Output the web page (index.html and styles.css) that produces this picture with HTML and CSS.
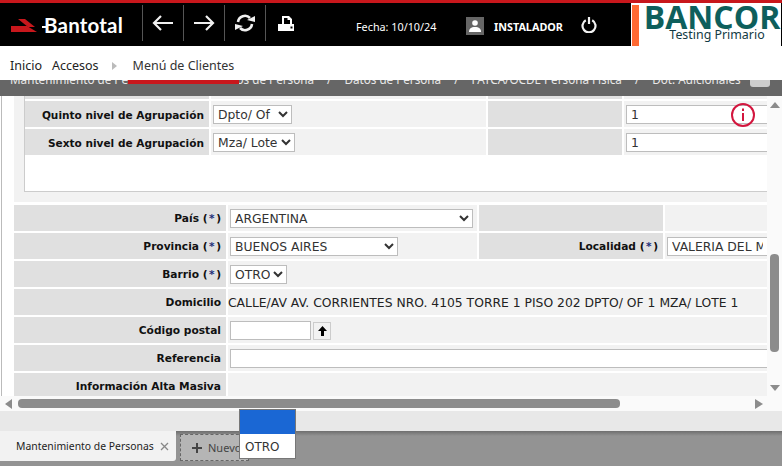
FILE: index.html
```html
<!DOCTYPE html>
<html lang="es">
<head>
  <meta charset="UTF-8" />
  <title>Bantotal - Mantenimiento de Personas</title>
  <link rel="stylesheet" href="styles.css">
</head>
<body>
  <div class="top-line"></div>
  <header class="topbar">
    <div class="logo">
      <svg class="logo-mark" width="28" height="14" viewBox="0 0 28 14">
        <polygon fill="#c8171c" points="7,0 14,0 24,8 17,8" />
        <polygon fill="#c8171c" points="0,7 16,7 26,13 0,13" />
      </svg>
      <span class="logo-text">Bantotal</span>
    </div>
    <div class="tool">
      <svg width="22" height="16" viewBox="0 0 22 16" fill="none" stroke="#f0f0f0" stroke-width="2.2">
        <path d="M21 8H2M9 1L2 8l7 7" />
      </svg>
    </div>
    <div class="tool">
      <svg width="22" height="16" viewBox="0 0 22 16" fill="none" stroke="#f0f0f0" stroke-width="2.2">
        <path d="M1 8h19M13 1l7 7-7 7" />
      </svg>
    </div>
    <div class="tool">
      <svg width="22" height="18" viewBox="0 0 22 18" fill="none" stroke="#f0f0f0" stroke-width="2.6">
        <path d="M4 8a7 7 0 0 1 12-4" />
        <path d="M18 10a7 7 0 0 1-12 4" />
        <path fill="#f0f0f0" stroke="none" d="M13 6l8-4v6zM9 12l-8 4v-6z" />
      </svg>
    </div>
    <div class="tool">
      <svg width="17" height="15" viewBox="0 0 17 15">
        <path fill="#fff" d="M4 0h7l3 3v5h2v7H0V8h4zM6 2v6h6V4H9.500V2z" fill-rule="evenodd" />
        <rect x="12.500" y="10.500" width="2" height="2" fill="#000" />
      </svg>
    </div>
    <span class="fecha">Fecha: 10/10/24</span>
    <span class="user-box">
      <svg width="12" height="12" viewBox="0 0 12 12">
        <circle cx="6" cy="3" r="2.800" fill="#fff" />
        <path fill="#fff" d="M0 12c0-3.500 2-5 6-5s6 1.500 6 5z" />
      </svg>
    </span>
    <span class="user-name">INSTALADOR</span>
    <svg class="power" width="16" height="16" viewBox="0 0 16 16" fill="none" stroke="#f2f2f2" stroke-width="2.200">
      <path d="M4.800 3.200a6.500 6.500 0 1 0 6.400 0" />
      <path d="M8 0v7" />
    </svg>
    <div class="brand">
      <div class="brand-bar"></div>
      <div class="brand-text">
        <div class="brand-name">BANCOR</div>
        <div class="brand-env">Testing Primario</div>
      </div>
    </div>
  </header>

  <nav class="menu">
    <a href="#">Inicio</a>
    <a href="#">Accesos</a>
    <span class="menu-arrow"></span>
    <a href="#" class="active">Menú de Clientes</a>
  </nav>

  <div class="crumbs">
    <span class="crumb-first">Mantenimiento de Personas</span>
    <span>/</span>
    <span>Datos de Persona</span>
    <span>/</span>
    <span>Datos de Persona</span>
    <span>/</span>
    <span>FATCA/OCDE Persona Física</span>
    <span>/</span>
    <span>Dot. Adicionales</span>
    <span class="crumb-toggle"></span>
  </div>

  <main class="work">
    <div class="view">
      <div class="panel">
        <div class="inner">
          <div class="grid-inner cut">
            <div class="lbl"></div><div class="val"></div><div class="lbl"></div><div class="val"></div>
          </div>
          <div class="grid-inner">
            <div class="lbl">Quinto nivel de Agrupación</div>
            <div class="val"><select class="sel-dpto"><option>Dpto/ Of</option></select></div>
            <div class="lbl"></div>
            <div class="val"><input class="inp-full" value="1"></div>

            <div class="lbl">Sexto nivel de Agrupación</div>
            <div class="val"><select class="sel-mza"><option>Mza/ Lote</option></select></div>
            <div class="lbl"></div>
            <div class="val"><input class="inp-full" value="1"></div>
          </div>
        </div>
      </div>

      <div class="grid-outer">
        <div class="lbl">País (<span class="star">*</span>)</div>
        <div class="val"><select class="sel-pais"><option>ARGENTINA</option></select></div>
        <div class="lbl"></div>
        <div class="val"></div>

        <div class="lbl">Provincia (<span class="star">*</span>)</div>
        <div class="val"><select class="sel-prov"><option>BUENOS AIRES</option></select></div>
        <div class="lbl">Localidad (<span class="star">*</span>)</div>
        <div class="val"><input class="inp-full" value="VALERIA DEL MAR"></div>

        <div class="lbl">Barrio (<span class="star">*</span>)</div>
        <div class="val wide"><select class="sel-barrio"><option>OTRO</option></select></div>

        <div class="lbl">Domicilio</div>
        <div class="val wide domicilio">CALLE/AV AV. CORRIENTES NRO. 4105 TORRE 1 PISO 202 DPTO/ OF 1 MZA/ LOTE 1</div>

        <div class="lbl">Código postal</div>
        <div class="val wide">
          <input class="inp-cp">
          <button class="btn-up">
            <svg width="9" height="10" viewBox="0 0 9 10"><path d="M4.500 0L9 5H6v5H3V5H0z" /></svg>
          </button>
        </div>

        <div class="lbl">Referencia</div>
        <div class="val wide"><input class="inp-full"></div>

        <div class="lbl">Información Alta Masiva</div>
        <div class="val wide"></div>
      </div>

      <svg class="info-icon" width="26" height="26" viewBox="0 0 26 26" fill="none" stroke="#d3163e">
        <circle cx="13" cy="13" r="11" stroke-width="2" />
        <path d="M13 11v8" stroke-width="2" />
        <path d="M13 6.500v2.500" stroke-width="2" />
      </svg>
    </div>

    <div class="vbar">
      <span class="arrow-up"></span>
      <span class="vthumb"></span>
      <span class="arrow-down"></span>
    </div>
  </main>

  <div class="hbar">
    <span class="arrow-left"></span>
    <span class="hthumb"></span>
    <span class="arrow-right"></span>
  </div>

  <div class="strip"></div>

  <footer class="tabs">
    <div class="tab">
      <span>Mantenimiento de Personas</span>
      <svg width="9" height="9" viewBox="0 0 9 9" stroke="#888" stroke-width="1.300"><path d="M1 1l7 7M8 1L1 8" /></svg>
    </div>
    <div class="tab-new">
      <svg width="10" height="10" viewBox="0 0 10 10" stroke="#444" stroke-width="2"><path d="M5 0v10M0 5h10" /></svg>
      <span>Nuevo</span>
    </div>
  </footer>

  <div class="popup">
    <div class="popup-sel"></div>
    <div class="popup-item">OTRO</div>
  </div>
</body>
</html>
```

FILE: styles.css
```css
* {
  box-sizing: border-box;
}
html, body {
  margin: 0;
  height: 466px;
  overflow: hidden;
}
body {
  position: relative;
  font-family: "DejaVu Sans", sans-serif;
  font-size: 10.65px;
  color: #111;
  background: #fff;
  display: flex;
  flex-direction: column;
}
.top-line {
  height: 3px;
  background: #c8171c;
}

/* header */
.topbar {
  height: 43px;
  background: #000;
  display: flex;
  align-items: center;
  color: #fff;
}
.logo {
  width: 142px;
  height: 43px;
  display: flex;
  align-items: center;
  padding-left: 11px;
}
.logo-mark {
  margin-top: 3px;
}
.logo-text {
  position: relative;
  font-family: Lato, sans-serif;
  font-weight: 700;
  font-size: 20.5px;
  margin-left: 5px;
  letter-spacing: 0.2px;
}
.logo-text::before {
  content: "";
  position: absolute;
  left: -2px;
  top: 13px;
  width: 4px;
  height: 2px;
  background: #fff;
}
.tool {
  width: 41px;
  height: 36px;
  margin-top: -3px;
  border-left: 1px solid #555;
  display: flex;
  align-items: center;
  justify-content: center;
}
.fecha {
  font-family: "Noto Sans", sans-serif;
  font-size: 10.8px;
  margin-left: 50px;
  margin-top: 3px;
  width: 109px;
}
.user-box {
  width: 18px;
  height: 18px;
  background: #666;
  display: flex;
  align-items: center;
  justify-content: center;
  margin-left: 1px;
  margin-top: 2px;
}
.user-name {
  font-family: "Noto Sans", sans-serif;
  font-weight: 700;
  font-size: 10.8px;
  margin-left: 10px;
  margin-top: 4px;
  width: 87px;
}
.power {
  margin-top: 1px;
}
.brand {
  margin-left: auto;
  width: 151px;
  height: 43px;
  background: #fff;
  border-right: 1px solid #000;
  display: flex;
  padding-top: 2px;
}
.brand-bar {
  width: 7px;
  margin-left: 1px;
  background: #ff6a33;
}
.brand-text {
  text-align: center;
  flex: 1;
  padding-left: 4px;
}
.brand-name {
  font-family: "Open Sans", sans-serif;
  font-weight: 700;
  font-size: 32px;
  line-height: 23px;
  color: #0e5f5c;
}
.brand-env {
  font-family: "Noto Sans", sans-serif;
  font-size: 12.4px;
  line-height: 12px;
  color: #123a44;
  padding-left: 10px;
  margin-top: 1px;
}

/* menu */
.menu {
  height: 34px;
  display: flex;
  align-items: center;
  padding: 5px 0 0 10px;
  font-family: "Noto Sans", sans-serif;
  font-size: 12.500px;
}
.menu a {
  color: #222;
  text-decoration: none;
  margin-right: 10px;
}
.menu-arrow {
  width: 0;
  height: 0;
  border-left: 5px solid #bbb;
  border-top: 4px solid transparent;
  border-bottom: 4px solid transparent;
  margin-left: 3px;
  margin-right: 16px;
}
.menu a.active {
  position: relative;
  color: #333;
}
.menu a.active::after {
  content: "";
  position: absolute;
  left: -5px;
  right: -5px;
  bottom: -10px;
  height: 4px;
  background: #c8171c;
}

/* breadcrumb, mostly hidden behind the menu */
.crumbs {
  height: 16px;
  background: #666;
  overflow: hidden;
  display: flex;
  gap: 13px;
  padding-left: 10px;
  color: #e8e8e8;
  font-family: "Noto Sans", sans-serif;
  font-size: 11.7px;
  line-height: 0;
  white-space: nowrap;
}
.crumbs span {
  flex: none;
  margin-top: -1px;
}
.crumbs .crumb-first {
  margin-right: 22px;
}
.crumbs .crumb-toggle {
  width: 20px;
  height: 7px;
  margin: 0 0 0 -4px;
  background: #ccc;
  border-radius: 0 0 3px 3px;
}

/* working area */
.work {
  height: 300px;
  display: flex;
}
.view {
  position: relative;
  width: 767px;
  height: 300px;
  overflow: hidden;
  padding-left: 14px;
  border-left: 1px solid #fff;
}
.view::before {
  content: "";
  position: absolute;
  left: 0;
  top: 0;
  bottom: 0;
  width: 1px;
  background: #bbb;
}
.panel {
  margin-left: -1px;
  width: 753px;
  height: 106px;
  background: #f2f2f2;
  padding-left: 10px;
}
.inner {
  height: 96px;
  background: #fff;
  border-left: 1px solid #ccc;
  border-bottom: 1px solid #ccc;
}
.grid-inner {
  display: grid;
  grid-template-columns: 184px 275px 134px 143px;
  grid-auto-rows: 26px;
  gap: 2px;
}
.grid-inner.cut {
  grid-auto-rows: 3px;
  margin-bottom: 2px;
}
.grid-outer {
  margin-left: -1px;
  margin-top: 3px;
  display: grid;
  grid-template-columns: 212px 249px 184px 102px;
  grid-auto-rows: 26px;
  gap: 2px;
  width: 753px;
}
.lbl {
  background: #e0e0e0;
  font-weight: 700;
  text-align: right;
  padding-right: 5px;
  line-height: 28px;
  white-space: nowrap;
}
.grid-inner .lbl {
  font-size: 10.55px;
}
.val {
  background: #f2f2f2;
  display: flex;
  align-items: center;
  padding: 1px 0 0 2px;
  overflow: hidden;
  min-width: 0;
  white-space: nowrap;
}
.wide {
  grid-column: span 3;
}
.star {
  color: #1c2f7a;
  padding: 0 1.500px;
}
.domicilio {
  padding-left: 0;
  font-size: 12.35px;
  color: #222;
}
select, input {
  font-family: "DejaVu Sans", sans-serif;
  font-size: 12.35px;
  color: #333;
  height: 19px;
  background: #fff;
  border: 1px solid #bdbdbd;
  padding: 0 4px;
  border-radius: 0;
  outline: none;
}
select {
  padding: 0;
}
.sel-dpto { width: 79px; }
.sel-mza { width: 82px; }
.sel-pais { width: 243px; }
.sel-prov { width: 168px; }
.sel-barrio { width: 57px; }
.inp-full {
  width: 100%;
  flex: none;
  border-right: 0;
}
.inp-cp {
  width: 81px;
  flex: none;
}
.btn-up {
  width: 18px;
  height: 18px;
  margin-left: 2px;
  padding: 0;
  background: #f2f2f2;
  border: 1px solid #ccc;
  display: flex;
  align-items: center;
  justify-content: center;
}
.info-icon {
  position: absolute;
  left: 729px;
  top: 6px;
}

/* scrollbars */
.vbar {
  width: 15px;
  height: 300px;
  background: #fafafa;
  display: flex;
  flex-direction: column;
  align-items: center;
}
.arrow-up {
  margin-top: 6px;
  border-left: 5px solid transparent;
  border-right: 5px solid transparent;
  border-bottom: 6px solid #8c8c8c;
}
.vthumb {
  width: 9px;
  height: 98px;
  margin-top: 146px;
  background: #8c8c8c;
  border-radius: 4px;
}
.arrow-down {
  margin-top: auto;
  margin-bottom: 5px;
  border-left: 5px solid transparent;
  border-right: 5px solid transparent;
  border-top: 6px solid #8c8c8c;
}
.hbar {
  height: 15px;
  background: #fafafa;
  display: flex;
  align-items: center;
  padding: 0 19px 0 5px;
}
.arrow-left {
  border-top: 5px solid transparent;
  border-bottom: 5px solid transparent;
  border-right: 7px solid #8c8c8c;
}
.hthumb {
  width: 602px;
  height: 9px;
  margin-left: 6px;
  background: #8c8c8c;
  border-radius: 4px;
}
.arrow-right {
  margin-left: auto;
  border-top: 5px solid transparent;
  border-bottom: 5px solid transparent;
  border-left: 8px solid #8c8c8c;
}
.strip {
  height: 20px;
  background: #e8e8e8;
}

/* bottom tabs */
.tabs {
  height: 35px;
  background: linear-gradient(#6e6e6e, #939393 5px);
  display: flex;
  align-items: flex-start;
}
.tab {
  width: 176px;
  height: 30px;
  background: #f2f2f2;
  border-radius: 0 0 3px 0;
  display: flex;
  align-items: center;
  padding: 0 7px 0 16px;
  justify-content: space-between;
  font-family: "Noto Sans", sans-serif;
  font-size: 10.4px;
  color: #222;
  white-space: nowrap;
}
.tab-new {
  width: 69px;
  height: 27px;
  margin: 3px 0 0 4px;
  background: #b5b5b5;
  border: 1px dashed #666;
  display: flex;
  align-items: center;
  padding-left: 11px;
  gap: 6px;
  font-family: "Noto Sans", sans-serif;
  font-size: 11px;
  color: #444;
}
.popup {
  position: absolute;
  left: 239px;
  top: 409px;
  width: 57px;
  height: 50px;
  background: #fff;
  border: 1px solid #777;
}
.popup-sel {
  height: 24px;
  background: #1a67d4;
}
.popup-item {
  padding-left: 5px;
  line-height: 26px;
  font-size: 12px;
  color: #333;
}
```
